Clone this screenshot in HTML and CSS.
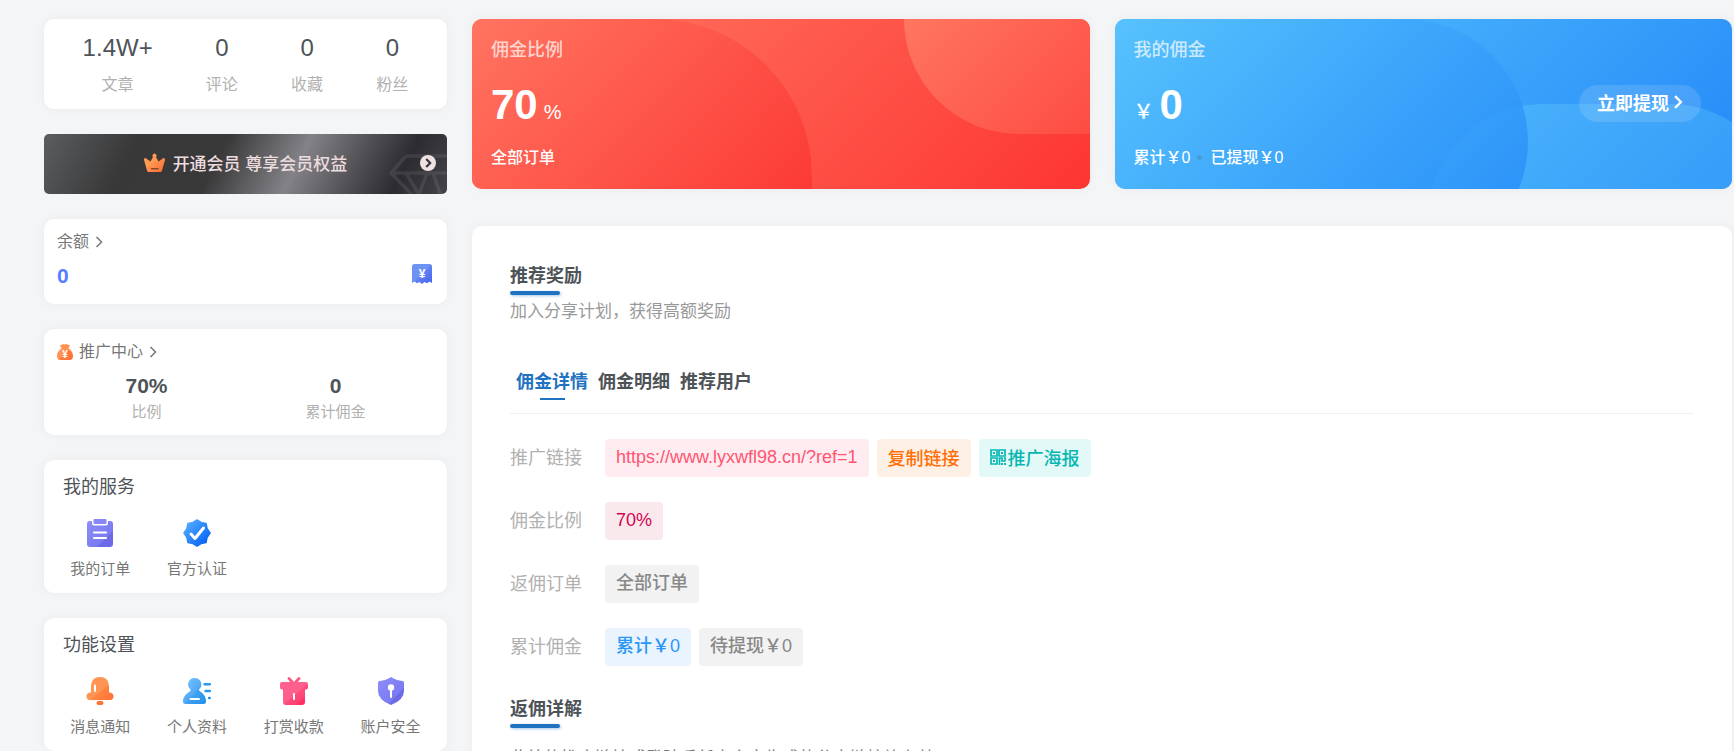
FILE: index.html
```
<!DOCTYPE html>
<html lang="zh-CN">
<head>
    <meta charset="UTF-8">
    <meta name="viewport" content="width=device-width, initial-scale=1">
    <title>推广中心</title>
    <link rel="stylesheet" href="styles.css">
</head>
<body>
    <div class="container">
        <aside class="sidebar">
            <div class="card stats">
                <div class="stat"><b>1.4W+</b><span>文章</span></div>
                <div class="stat"><b>0</b><span>评论</span></div>
                <div class="stat"><b>0</b><span>收藏</span></div>
                <div class="stat"><b>0</b><span>粉丝</span></div>
            </div>

            <a class="vip" href="#">
                <svg class="vip-crown" viewBox="0 0 21 19">
                    <defs><linearGradient id="gCrown" x1="0" y1="0" x2="1" y2="1"><stop offset="0.4" stop-color="#ff9a52"/><stop offset="0.9" stop-color="#ff6f35"/></linearGradient></defs>
                    <path fill="url(#gCrown)" d="M3 17.500 0 7Q-.2 5 1.500 5L6.500 8.500 9 4A2 2 0 1 1 12 4L14.500 8.500 19.500 5Q21.200 5 21 7L18 17.500Q17.600 19 16.400 19H4.600Q3.400 19 3 17.500Z"/>
                    <path stroke="#8a4a2c" stroke-width="1.600" stroke-linecap="round" d="M7.500 15.800h6.500"/>
                </svg>
                <span>开通会员 尊享会员权益</span>
                <svg class="vip-diamond" viewBox="0 0 58 40" fill="none" stroke="#fff" stroke-width="3.500" stroke-linejoin="round">
                    <path d="M17 2H62M17 2 2 19 24 42M2 19H62M17 19 32 44M38 19 30 40M44 19 52 42"/>
                </svg>
                <svg class="vip-arrow" viewBox="0 0 16 16">
                    <circle cx="8" cy="8" r="8" fill="#efe0e2"/>
                    <path fill="none" stroke="#37353a" stroke-width="2.200" d="M6.200 4 10.200 8 6.200 12"/>
                </svg>
            </a>

            <div class="card balance">
                <a class="card-link" href="#">余额 <svg class="angle" viewBox="0 0 8 12"><path d="M1.500 1 6.500 6 1.500 11"/></svg></a>
                <div class="balance-row">
                    <b>0</b>
                    <svg class="icon-bill" viewBox="0 0 20 20">
                        <defs><linearGradient id="gBill" x1="0" y1="0" x2="1" y2="1"><stop offset="0.45" stop-color="#6f93f3"/><stop offset="0.55" stop-color="#5f80f2"/><stop offset="1" stop-color="#4461f0"/></linearGradient></defs>
                        <path fill="url(#gBill)" d="M2.500 0H17.500Q20 0 20 2.500V19L17.500 17.500 15 19.200 12.500 18 10 20 7.500 18 5 19.200 2.500 17.500 0 19V2.500Q0 0 2.500 0Z"/>
                        <text x="10" y="14" text-anchor="middle" fill="#fff" font-size="12" font-weight="bold">¥</text>
                    </svg>
                </div>
            </div>

            <div class="card promo">
                <a class="card-link" href="#">
                    <svg class="icon-bag" viewBox="0 0 16 16">
                        <defs><linearGradient id="gBag" x1="0" y1="0" x2="1" y2="1"><stop offset="0.5" stop-color="#ff9452"/><stop offset="0.6" stop-color="#ff7a3c"/><stop offset="1" stop-color="#ff6a30"/></linearGradient></defs>
                        <path fill="url(#gBag)" d="M3 1.200 5 .8 6.500 0 8 .6 9.500 0 11 .8 13 1.200 11.500 4.500Q16 7.500 16 12 16 16 12.500 16H3.500Q0 16 0 12 0 7.500 4.500 4.500Z"/>
                        <text x="8" y="13.500" text-anchor="middle" fill="#fff" font-size="10" font-weight="bold">¥</text>
                    </svg>
                    推广中心
                    <svg class="angle" viewBox="0 0 8 12"><path d="M1.500 1 6.500 6 1.500 11"/></svg>
                </a>
                <div class="promo-row">
                    <div><b>70%</b><span>比例</span></div>
                    <div><b>0</b><span>累计佣金</span></div>
                </div>
            </div>

            <div class="card menu">
                <h3>我的服务</h3>
                <div class="menu-grid">
                    <a href="#">
                        <svg viewBox="0 0 28 28">
                            <defs><linearGradient id="gPurple" x1="0" y1="0" x2="1" y2="1"><stop offset="0" stop-color="#8e8df8"/><stop offset="0.68" stop-color="#7b7bf3"/><stop offset="0.7" stop-color="#6d6ae8"/><stop offset="1" stop-color="#6d6ae8"/></linearGradient></defs>
                            <path fill="url(#gPurple)" d="M4 2H6V4Q6 6.500 8.500 6.500H19.500Q22 6.500 22 4V2H24Q27 2 27 5V25Q27 28 24 28H4Q1 28 1 25V5Q1 2 4 2Z"/>
                            <rect x="7.500" y="0" width="13" height="5" rx="1" fill="#8987f7"/>
                            <path stroke="#fff" stroke-width="2.200" stroke-linecap="round" d="M8 13.500H20M8 19H20"/>
                        </svg>
                        <span>我的订单</span>
                    </a>
                    <a href="#">
                        <svg viewBox="0 0 28 28">
                            <defs><linearGradient id="gBlue" x1="0.1" y1="0.1" x2="0.9" y2="0.9"><stop offset="0" stop-color="#52abff"/><stop offset="1" stop-color="#0562f5"/></linearGradient></defs>
                            <path fill="url(#gBlue)" stroke="url(#gBlue)" stroke-width="1.500" stroke-linejoin="round" d="M14 1 18 3.500 23 4.500 24 9.500 27 14 24 18.500 23 23.500 18 24.500 14 27 10 24.500 5 23.500 4 18.500 1 14 4 9.500 5 4.500 10 3.500Z"/>
                            <path fill="none" stroke="#fff" stroke-width="3" stroke-linecap="round" stroke-linejoin="round" d="M8 15 12 19.500 20.500 9"/>
                        </svg>
                        <span>官方认证</span>
                    </a>
                </div>
            </div>

            <div class="card menu">
                <h3>功能设置</h3>
                <div class="menu-grid">
                    <a href="#">
                        <svg viewBox="0 0 28 28">
                            <defs><linearGradient id="gOrange" x1="0" y1="0" x2="1" y2="1"><stop offset="0.55" stop-color="#ff9552"/><stop offset="0.6" stop-color="#ff8340"/><stop offset="1" stop-color="#ff7135"/></linearGradient></defs>
                            <path fill="url(#gOrange)" d="M5 15V9.500Q5 0 14 0T23 9.500V15.500H24Q27.500 16 27.500 19.200 27.500 23 24 23H4Q.5 23 .5 19.200 .5 16 4 15.500H5Z"/>
                            <rect x="10.500" y="24" width="7" height="4" rx="2" fill="#ff7135"/>
                            <path stroke="#fff" stroke-width="2" stroke-linecap="round" d="M9 8.500V14"/>
                        </svg>
                        <span>消息通知</span>
                    </a>
                    <a href="#">
                        <svg viewBox="0 0 28 28">
                            <defs><linearGradient id="gSky" x1="0" y1="0" x2="1" y2="1"><stop offset="0.2" stop-color="#6bbcff"/><stop offset="0.5" stop-color="#55aaf8"/><stop offset="0.6" stop-color="#3a9ff0"/><stop offset="1" stop-color="#2191ea"/></linearGradient></defs>
                            <path fill="url(#gSky)" d="M12 1A6.500 6.500 0 0 1 16 12.500Q16 14 18 15 23 18.500 23 24.500 23 27 20.500 27H2.500Q0 27 0 24.500 0 18.500 6 15 8 14 7.500 12.500A6.500 6.500 0 0 1 12 1Z"/>
                            <path stroke="#fff" stroke-width="2" stroke-linecap="round" d="M7.500 22H16"/>
                            <path stroke="#2c97ee" stroke-width="2.400" stroke-linecap="round" d="M21.500 7.200H27M22.500 14H27M26 21H26.800"/>
                        </svg>
                        <span>个人资料</span>
                    </a>
                    <a href="#">
                        <svg viewBox="0 0 28 28">
                            <defs><linearGradient id="gPink" x1="0" y1="0" x2="1" y2="1"><stop offset="0.52" stop-color="#ff5f8c"/><stop offset="0.56" stop-color="#ff4a7c"/><stop offset="0.75" stop-color="#ff4376"/><stop offset="0.8" stop-color="#ff2f66"/></linearGradient></defs>
                            <path fill="none" stroke="#ff5785" stroke-width="2.800" stroke-linecap="round" d="M9 1.500 14 7 19 1.500"/>
                            <path fill="url(#gPink)" d="M2 5H26Q28 5 28 7V10.500Q28 12.500 26 12.500H25V25Q25 28 22 28H6Q3 28 3 25V12.500H2Q0 12.500 0 10.500V7Q0 5 2 5Z"/>
                            <path stroke="#fff" stroke-width="2" stroke-linecap="round" d="M14 17V22"/>
                        </svg>
                        <span>打赏收款</span>
                    </a>
                    <a href="#">
                        <svg viewBox="0 0 28 28">
                            <path fill="url(#gPurple)" d="M14 0Q19 3.500 25.500 4 27 4.200 27 5.500V14Q27 23 14 28 1 23 1 14V5.500Q1 4.200 2.500 4 9 3.500 14 0Z"/>
                            <circle cx="14" cy="10.500" r="3.200" fill="#fff"/>
                            <path stroke="#fff" stroke-width="2" stroke-linecap="round" d="M14 12V20"/>
                        </svg>
                        <span>账户安全</span>
                    </a>
                </div>
            </div>
        </aside>

        <main class="content">
            <div class="heroes">
                <section class="hero hero-red">
                    <p class="hero-title">佣金比例</p>
                    <p class="hero-num"><b>70</b><span>%</span></p>
                    <p class="hero-sub">全部订单</p>
                </section>
                <section class="hero hero-blue">
                    <p class="hero-title">我的佣金</p>
                    <p class="hero-num"><span>￥</span><b>0</b></p>
                    <p class="hero-sub">累计￥0<i class="dot"></i>已提现￥0</p>
                    <button type="button" class="withdraw">立即提现<svg class="angle" viewBox="0 0 8 12"><path d="M1.500 1 6.500 6 1.500 11"/></svg></button>
                </section>
            </div>

            <section class="panel">
                <h2 class="title">推荐奖励</h2>
                <p class="desc">加入分享计划，获得高额奖励</p>

                <nav class="tabs">
                    <a class="active" href="#">佣金详情</a>
                    <a href="#">佣金明细</a>
                    <a href="#">推荐用户</a>
                </nav>

                <dl class="details">
                    <dt>推广链接</dt>
                    <dd>
                        <a class="tag tag-red" href="#">https://www.lyxwfl98.cn/?ref=1</a>
                        <button type="button" class="tag tag-orange">复制链接</button>
                        <button type="button" class="tag tag-cyan"><svg class="icon-qr" viewBox="0 0 16 16"><path fill="none" stroke="currentColor" stroke-width="1.700" d="M1 1H7V7H1ZM9 1H15V7H9ZM1 9H7V15H1ZM9.500 16V9H12V12H15V8"/><path fill="currentColor" d="M3 3H5V5H3ZM11 3H13V5H11ZM3 11H5V13H3ZM11 14H13V16H11ZM14 14H16V16H14Z"/></svg>推广海报</button>
                    </dd>
                    <dt>佣金比例</dt>
                    <dd><span class="tag tag-crimson">70%</span></dd>
                    <dt>返佣订单</dt>
                    <dd><span class="tag">全部订单</span></dd>
                    <dt>累计佣金</dt>
                    <dd><span class="tag tag-blue">累计￥0</span><span class="tag">待提现￥0</span></dd>
                </dl>

                <h2 class="title">返佣详解</h2>
                <p class="desc rule">此处的推广链接或登陆后任意文章生成的分享链接均有效</p>
            </section>
        </main>
    </div>
</body>
</html>
```
FILE: styles.css
```
* {
    margin: 0;
    padding: 0;
    box-sizing: border-box;
}

body {
    background: #f4f5f7;
    color: #4e5358;
    font-family: "Liberation Sans", "Noto Sans CJK SC", sans-serif;
    font-size: 16px;
    overflow: hidden;
}

a {
    color: inherit;
    text-decoration: none;
}

button {
    border: none;
    font-family: inherit;
    cursor: pointer;
}

svg {
    flex-shrink: 0;
}

.container {
    display: flex;
    align-items: flex-start;
    gap: 25px;
    padding: 19px 2px 0 44px;
}

.sidebar {
    display: flex;
    flex-direction: column;
    gap: 25px;
    width: 403px;
    flex-shrink: 0;
}

.content {
    flex: 1;
    min-width: 0;
}

.card,
.panel {
    background: #fff;
    border-radius: 10px;
    box-shadow: 0 0 10px rgba(116, 116, 116, 0.08);
}

.angle {
    width: 8px;
    height: 12px;
    fill: none;
    stroke: currentColor;
    stroke-width: 1.5;
}

/* user stats */
.stats {
    display: flex;
    justify-content: space-around;
    padding: 9px 12px 7px;
    text-align: center;
}

.stat b {
    display: block;
    font-size: 24px;
    font-weight: 400;
    line-height: 40px;
}

.stat span {
    display: block;
    color: #b1b1b1;
    line-height: 34px;
}

/* vip banner */
.vip {
    position: relative;
    display: flex;
    align-items: center;
    justify-content: center;
    gap: 8px;
    height: 60px;
    padding-bottom: 4px;
    border-radius: 5px;
    overflow: hidden;
    color: #ecdcdf;
    font-size: 17px;
    font-weight: 500;
    background: linear-gradient(117deg, #5b5d60 0%, #383838 22%, #39393a 43%, #838287 62%, #4a494e 78%, #2c2c31 87%, #454348 100%);
}

.vip-crown {
    width: 21px;
    height: 19px;
}

.vip-diamond {
    position: absolute;
    right: 0;
    bottom: 0;
    width: 58px;
    height: 40px;
    opacity: 0.08;
}

.vip-arrow {
    position: absolute;
    right: 11px;
    top: 21px;
    width: 16px;
    height: 16px;
}

/* balance and promo */
.balance {
    padding: 9px 13px;
}

.card-link {
    display: flex;
    align-items: center;
    gap: 6px;
    color: #777;
    line-height: 28px;
}

.balance-row {
    display: flex;
    align-items: center;
    justify-content: space-between;
    height: 39px;
}

.balance-row b {
    color: #5c7cff;
    font-size: 21px;
}

.icon-bill {
    width: 20px;
    height: 20px;
    margin: 0 2px 4px;
}

.promo {
    padding: 9px 13px 13px;
}

.icon-bag {
    width: 16px;
    height: 16px;
}

.promo-row {
    display: flex;
    margin: 5px 4px 0 -5px;
    text-align: center;
}

.promo-row div {
    flex: 1;
}

.promo-row b {
    display: block;
    font-size: 21px;
    line-height: 30px;
}

.promo-row span {
    display: block;
    color: #b1b1b1;
    font-size: 15px;
    line-height: 21px;
}

/* icon menus */
.menu {
    padding: 12px 8px;
}

.menu h3 {
    padding-left: 11px;
    font-size: 18px;
    font-weight: 400;
    line-height: 30px;
}

.menu-grid {
    display: grid;
    grid-template-columns: repeat(4, 1fr);
    margin-top: 17px;
}

.menu-grid a {
    display: flex;
    flex-direction: column;
    align-items: center;
    gap: 10px;
    color: #777;
    font-size: 15px;
    line-height: 24px;
}

.menu-grid svg {
    width: 28px;
    height: 28px;
}

/* commission cards */
.heroes {
    display: grid;
    grid-template-columns: 1fr 1fr;
    gap: 25px;
    margin-bottom: 37px;
}

.hero {
    position: relative;
    z-index: 0;
    padding: 15px 19px 18px;
    border-radius: 10px;
    overflow: hidden;
    color: #fff;
    font-weight: 500;
    box-shadow: 0 0 10px rgba(116, 116, 116, 0.08);
}

.hero::before,
.hero::after {
    content: "";
    position: absolute;
    z-index: -1;
}

.hero-red {
    background: linear-gradient(135deg, #ff7a65, #fd3532);
}

.hero-red::before {
    left: 0;
    top: 0;
    width: 55%;
    height: 100%;
    border-top-right-radius: 157px;
    background: linear-gradient(135deg, #ff7460, #fc3a36);
}

.hero-red::after {
    right: 0;
    top: 0;
    width: 30%;
    height: 115px;
    border-bottom-left-radius: 115px;
    background: linear-gradient(135deg, #ff7660, #fd4c43);
}

.hero-blue {
    background: linear-gradient(135deg, #5bc5fe, #2489f8);
}

.hero-blue::before {
    right: -53px;
    top: 85px;
    width: 357px;
    height: 230px;
    border-radius: 115px;
    background: linear-gradient(135deg, #4cb5fb, #2b90f8);
}

.hero-blue::after {
    left: 0;
    top: 0;
    width: 67%;
    height: 246px;
    border-radius: 0 123px 123px 0;
    background: linear-gradient(135deg, #56c1fd, #2288f8);
    opacity: 0.8;
}

.hero-title {
    font-size: 18px;
    line-height: 32px;
    opacity: 0.7;
}

.hero-num {
    display: flex;
    align-items: baseline;
    gap: 6px;
    height: 50px;
    margin: 14px 0 15px;
    font-size: 20px;
    line-height: 50px;
}

.hero-num b {
    font-size: 42px;
}

.hero-sub {
    line-height: 26px;
}

.dot {
    display: inline-block;
    width: 5px;
    height: 5px;
    margin: 0 8px 3px 7px;
    border-radius: 50%;
    background: #4a9cd4;
}

.withdraw {
    position: absolute;
    right: 31px;
    top: 66px;
    display: flex;
    align-items: center;
    gap: 4px;
    height: 37px;
    padding: 0 18px 4px;
    border-radius: 19px;
    background: rgba(255, 255, 255, 0.13);
    color: #fff;
    font-size: 18px;
    font-weight: 700;
}

.withdraw .angle {
    width: 10px;
    height: 14px;
    stroke-width: 2;
}

/* main panel */
.panel {
    padding: 35px 38px;
}

.title {
    font-size: 18px;
    line-height: 30px;
}

.title::after {
    content: "";
    display: block;
    width: 50px;
    height: 4px;
    border-radius: 4px;
    background: #1f73c1;
    box-shadow: 1px 1px 3px rgba(31, 115, 193, 0.4);
}

.desc {
    margin-top: 2px;
    color: #999;
    font-size: 17px;
    line-height: 30px;
}

.rule {
    margin-top: 16px;
    color: #777;
}

.tabs {
    display: flex;
    gap: 10px;
    height: 47px;
    margin-top: 40px;
    padding-left: 6px;
    border-bottom: 1px solid #f0f1f2;
    font-size: 18px;
    font-weight: 700;
    line-height: 31px;
}

.tabs .active {
    color: #1f73c1;
}

.tabs .active::after {
    content: "";
    display: block;
    width: 25px;
    height: 2px;
    margin: 0 auto;
    background: #1f73c1;
}

.details {
    display: grid;
    grid-template-columns: 95px 1fr;
    row-gap: 25px;
    margin: 25px 0 28px;
    font-size: 18px;
    line-height: 38px;
}

.details dt {
    color: #b1b1b1;
}

.details dd {
    display: flex;
    gap: 8px;
}

.tag {
    display: flex;
    align-items: center;
    gap: 2px;
    height: 38px;
    padding: 0 11px 3px;
    border-radius: 4px;
    background: #f2f2f2;
    color: #888;
    font-size: 18px;
    font-weight: 500;
}

.tag-red {
    background: #ffecf0;
    color: #ff5473;
}

.tag-orange {
    background: #fff0e5;
    color: #ff6f06;
}

.tag-cyan {
    background: #e3f9f8;
    color: #08b7b2;
}

.tag-crimson {
    background: #fae9ec;
    color: #d4034f;
}

.tag-blue {
    background: #e9f4ff;
    color: #2997f7;
}

.icon-qr {
    width: 16px;
    height: 16px;
}
```
